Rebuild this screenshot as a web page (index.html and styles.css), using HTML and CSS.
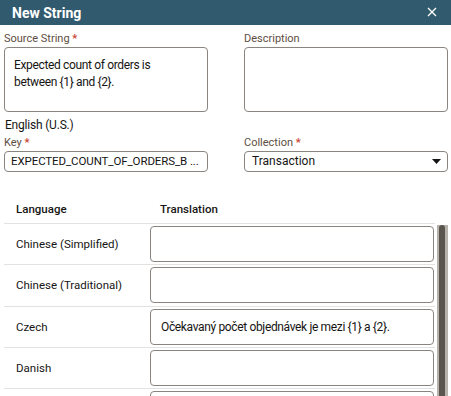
FILE: index.html
```html
<!DOCTYPE html>
<html lang="en">
<head>
    <meta charset="UTF-8">
    <meta name="viewport" content="width=device-width, initial-scale=1.0">
    <title>New String</title>
    <link rel="stylesheet" href="styles.css">
</head>
<body>
    <div class="dialog">
        <div class="dialog-header">
            <span class="dialog-title">New String</span>
            <svg class="close-icon" width="10" height="10" viewBox="0 0 10 10">
                <path d="M1 1 L9 9 M9 1 L1 9" stroke="#ffffff" stroke-width="1.3" fill="none"/>
            </svg>
        </div>

        <div class="form-grid">
            <div class="field">
                <label class="field-label">Source String <span class="req">*</span></label>
                <div class="text-area">Expected count of orders is between {1} and {2}.</div>
                <div class="locale">English (U.S.)</div>
            </div>
            <div class="field">
                <label class="field-label">Description</label>
                <div class="text-area"></div>
            </div>
            <div class="field">
                <label class="field-label">Key <span class="req">*</span></label>
                <div class="text-input key-input">EXPECTED_COUNT_OF_ORDERS_B ...</div>
            </div>
            <div class="field">
                <label class="field-label">Collection <span class="req">*</span></label>
                <div class="select-input">
                    <span>Transaction</span>
                    <svg width="9" height="5" viewBox="0 0 9 5"><path d="M0 0 L9 0 L4.5 5 Z" fill="#161513"/></svg>
                </div>
            </div>
        </div>

        <div class="translations">
            <div class="table">
                <div class="table-head">
                    <div class="col-lang">Language</div>
                    <div class="col-trans">Translation</div>
                </div>
                <div class="table-row">
                    <div class="col-lang">Chinese (Simplified)</div>
                    <div class="cell-input"></div>
                </div>
                <div class="table-row">
                    <div class="col-lang">Chinese (Traditional)</div>
                    <div class="cell-input"></div>
                </div>
                <div class="table-row">
                    <div class="col-lang">Czech</div>
                    <div class="cell-input">Očekavaný počet objednávek je mezi {1} a {2}.</div>
                </div>
                <div class="table-row">
                    <div class="col-lang">Danish</div>
                    <div class="cell-input"></div>
                </div>
                <div class="table-row">
                    <div class="col-lang"></div>
                    <div class="cell-input"></div>
                </div>
            </div>
            <div class="scrollbar"><div class="scroll-thumb"></div></div>
        </div>
    </div>
</body>
</html>
```

FILE: styles.css
```css
body {
    margin: 0;
    font-family: Roboto, "Noto Sans", sans-serif;
    background-color: #ffffff;
    color: #161513;
    overflow: hidden;
}

.dialog {
    width: 451px;
    height: 396px;
    overflow: hidden;
}

.dialog-header {
    height: 25px;
    background-color: #325a6e;
    color: #ffffff;
    display: flex;
    align-items: center;
    justify-content: space-between;
    padding: 0 14px 0 12px;
}

.dialog-title {
    font-size: 14px;
    font-weight: bold;
}

.close-icon {
    margin-top: -2px;
}

.form-grid {
    display: grid;
    grid-template-columns: 204px 204px;
    column-gap: 36px;
    row-gap: 0;
    padding: 7px 4px 0 4px;
}

.field-label {
    display: block;
    font-size: 11px;
    color: #5e4e42;
    line-height: 14px;
    height: 15px;
}

.req {
    color: #c74634;
    font-weight: bold;
}

.text-area {
    height: 65px;
    box-sizing: border-box;
    border: 1px solid #8a8480;
    border-radius: 4px;
    padding: 9px 30px 9px 9px;
    font-size: 12px;
    letter-spacing: -0.35px;
    line-height: 17px;
}

.locale {
    font-size: 12px;
    letter-spacing: -0.2px;
    line-height: 16px;
    margin: 5px 0 3px 1px;
}

.text-input,
.select-input {
    height: 21px;
    box-sizing: border-box;
    border: 1px solid #8a8480;
    border-radius: 4px;
    padding: 0 6px;
    font-size: 12px;
    line-height: 19px;
    white-space: nowrap;
    overflow: hidden;
}

.key-input {
    font-size: 11.5px;
    letter-spacing: -0.1px;
}

.select-input {
    display: flex;
    align-items: center;
    justify-content: space-between;
    padding: 0 6px 0 7px;
}

.translations {
    display: flex;
    margin-top: 22px;
    padding-left: 4px;
}

.table {
    width: 431px;
}

.table-head {
    display: flex;
    height: 29px;
    align-items: center;
    font-weight: 500;
    border-bottom: 1px solid #e4e2e0;
}

.table-head .col-trans {
    padding-left: 10px;
    font-size: 11.5px;
}

.col-lang {
    width: 146px;
    padding-left: 12px;
    box-sizing: border-box;
    font-size: 11.5px;
}

.table-row {
    display: flex;
    align-items: center;
    height: 40.25px;
    border-bottom: 1px solid #e4e2e0;
}

.cell-input {
    width: 284px;
    height: 36px;
    box-sizing: border-box;
    border: 1px solid #8a8480;
    border-radius: 4px;
    padding: 0 10px;
    font-size: 12px;
    letter-spacing: -0.35px;
    line-height: 34px;
}

.scrollbar {
    width: 11px;
    margin-left: 2px;
    margin-top: 31px;
    background-color: #b8b2ac;
    height: 200px;
}

.scroll-thumb {
    width: 6px;
    margin-left: 2px;
    height: 200px;
    background-color: #5b554f;
    border-radius: 3px 3px 0 0;
}
```
